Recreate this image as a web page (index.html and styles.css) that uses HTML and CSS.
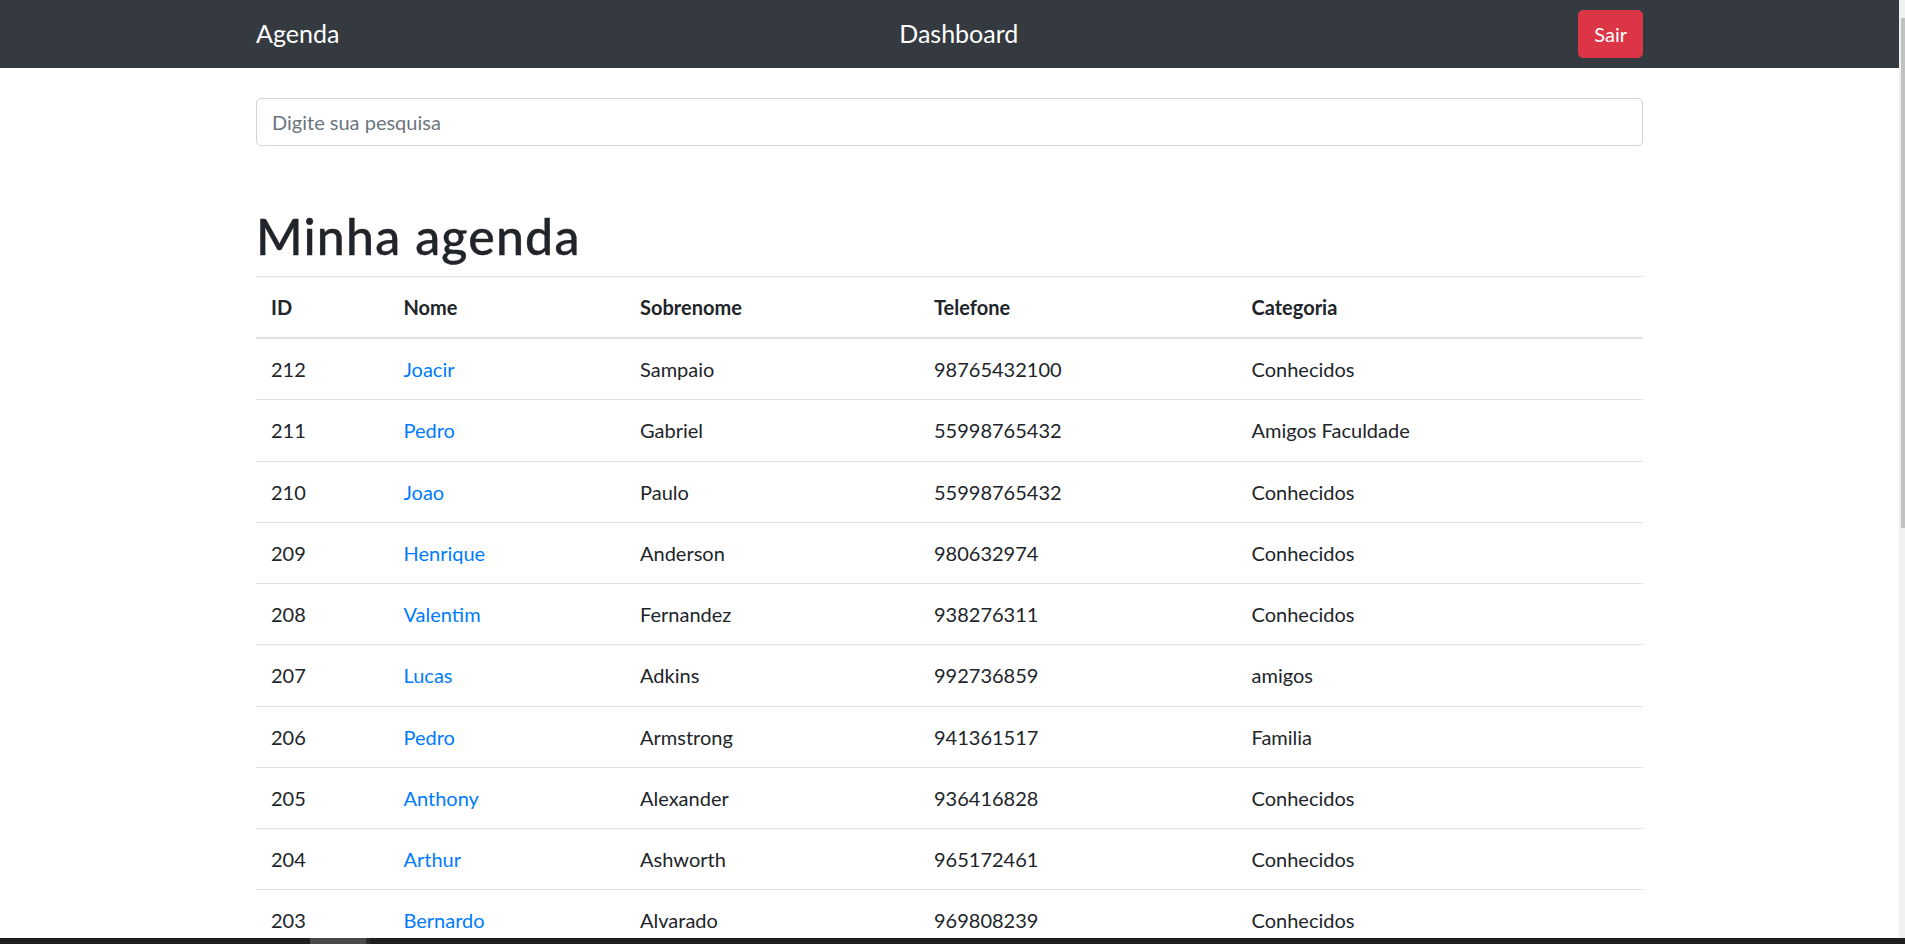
FILE: index.html
```html
<!DOCTYPE html>
<html lang="pt-BR">
<head>
<meta charset="utf-8">
<title>Agenda - Dashboard</title>
<link rel="stylesheet" href="styles.css">
</head>
<body>
<div class="page">
  <nav class="navbar">
    <div class="container nav-inner">
      <a class="brand" href="#">Agenda</a>
      <span class="nav-title">Dashboard</span>
      <button class="btn-sair" type="button">Sair</button>
    </div>
  </nav>
  <main class="container">
    <input class="search" type="text" placeholder="Digite sua pesquisa">
    <h1 class="title">Minha agenda</h1>
    <table class="agenda">
      <colgroup>
        <col class="c-id"><col class="c-nome"><col class="c-sobrenome"><col class="c-tel"><col class="c-cat">
      </colgroup>
      <thead>
        <tr><th>ID</th><th>Nome</th><th>Sobrenome</th><th>Telefone</th><th>Categoria</th></tr>
      </thead>
      <tbody>
        <tr><td>212</td><td><a href="#">Joacir</a></td><td>Sampaio</td><td>98765432100</td><td>Conhecidos</td></tr>
        <tr><td>211</td><td><a href="#">Pedro</a></td><td>Gabriel</td><td>55998765432</td><td>Amigos Faculdade</td></tr>
        <tr><td>210</td><td><a href="#">Joao</a></td><td>Paulo</td><td>55998765432</td><td>Conhecidos</td></tr>
        <tr><td>209</td><td><a href="#">Henrique</a></td><td>Anderson</td><td>980632974</td><td>Conhecidos</td></tr>
        <tr><td>208</td><td><a href="#">Valentim</a></td><td>Fernandez</td><td>938276311</td><td>Conhecidos</td></tr>
        <tr><td>207</td><td><a href="#">Lucas</a></td><td>Adkins</td><td>992736859</td><td>amigos</td></tr>
        <tr><td>206</td><td><a href="#">Pedro</a></td><td>Armstrong</td><td>941361517</td><td>Familia</td></tr>
        <tr><td>205</td><td><a href="#">Anthony</a></td><td>Alexander</td><td>936416828</td><td>Conhecidos</td></tr>
        <tr><td>204</td><td><a href="#">Arthur</a></td><td>Ashworth</td><td>965172461</td><td>Conhecidos</td></tr>
        <tr><td>203</td><td><a href="#">Bernardo</a></td><td>Alvarado</td><td>969808239</td><td>Conhecidos</td></tr>
      </tbody>
    </table>
  </main>
</div>
<div class="vscroll"><div class="vthumb"></div></div>
<div class="hbar"><div class="hthumb"></div></div>
</body>
</html>
```
FILE: styles.css
```css
html, body {
  margin: 0;
  padding: 0;
  height: 944px;
  overflow: hidden;
  background: #fff;
}

body {
  font-family: Lato, "Open Sans", "Noto Sans", sans-serif;
  font-size: 20px;
  line-height: 30px;
  color: #212529;
}

.page {
  margin-right: 6px;
}

.container {
  width: 1387px;
  margin: 0 auto;
}

.navbar {
  background: #343a40;
  padding: 10px 0;
  height: 68px;
  box-sizing: border-box;
}

.nav-inner {
  display: flex;
  justify-content: space-between;
  align-items: center;
  height: 48px;
}

.brand {
  color: #fff;
  text-decoration: none;
  font-size: 25px;
  line-height: 37.5px;
}

.nav-title {
  color: #fff;
  font-size: 25px;
  line-height: 37.5px;
}

.btn-sair {
  font-family: inherit;
  background: #dc3545;
  border: 1px solid #dc3545;
  color: #fff;
  font-size: 20px;
  line-height: 30px;
  height: 48px;
  padding: 7.5px 15px;
  border-radius: 5px;
  box-sizing: border-box;
}

.search {
  display: block;
  box-sizing: border-box;
  width: 100%;
  height: 48px;
  margin: 30px 0 60px;
  padding: 7.5px 15px;
  font-family: inherit;
  font-size: 20px;
  line-height: 30px;
  color: #495057;
  border: 1px solid #ced4da;
  border-radius: 5px;
  outline: none;
}

.search::placeholder {
  color: #6c757d;
  opacity: 1;
}

.title {
  margin: 0 0 10px;
  font-size: 50px;
  line-height: 60px;
  font-weight: 500;
  letter-spacing: 1.2px;
  color: #212529;
  -webkit-text-stroke: 0.4px #212529;
}

.agenda {
  width: 100%;
  border-collapse: collapse;
  table-layout: fixed;
}

.c-id { width: 132.5px; }
.c-nome { width: 236.5px; }
.c-sobrenome { width: 294px; }
.c-tel { width: 317.5px; }

.agenda th,
.agenda td {
  text-align: left;
  padding: 15px;
  border-top: 1px solid #dee2e6;
  vertical-align: top;
  white-space: nowrap;
}

.agenda td {
  padding-top: 15.125px;
  padding-bottom: 15.125px;
}

.agenda thead th {
  font-weight: 700;
  border-bottom: 2px solid #dee2e6;
  vertical-align: bottom;
}

.agenda a {
  color: #007bff;
  text-decoration: none;
}

.vscroll {
  position: fixed;
  top: 0;
  right: 0;
  width: 6px;
  height: 944px;
  background: #f1f1f1;
}

.vthumb {
  margin-top: 18px;
  margin-left: 2px;
  width: 4px;
  height: 510px;
  background: #c1c1c1;
}

.hbar {
  position: fixed;
  left: 0;
  right: 0;
  bottom: 0;
  height: 6px;
  background: #1f1f1f;
}

.hthumb {
  margin-left: 310px;
  width: 56px;
  height: 6px;
  background: #4a4a4a;
  border-right: 4px solid #2b2b2b;
}
```
